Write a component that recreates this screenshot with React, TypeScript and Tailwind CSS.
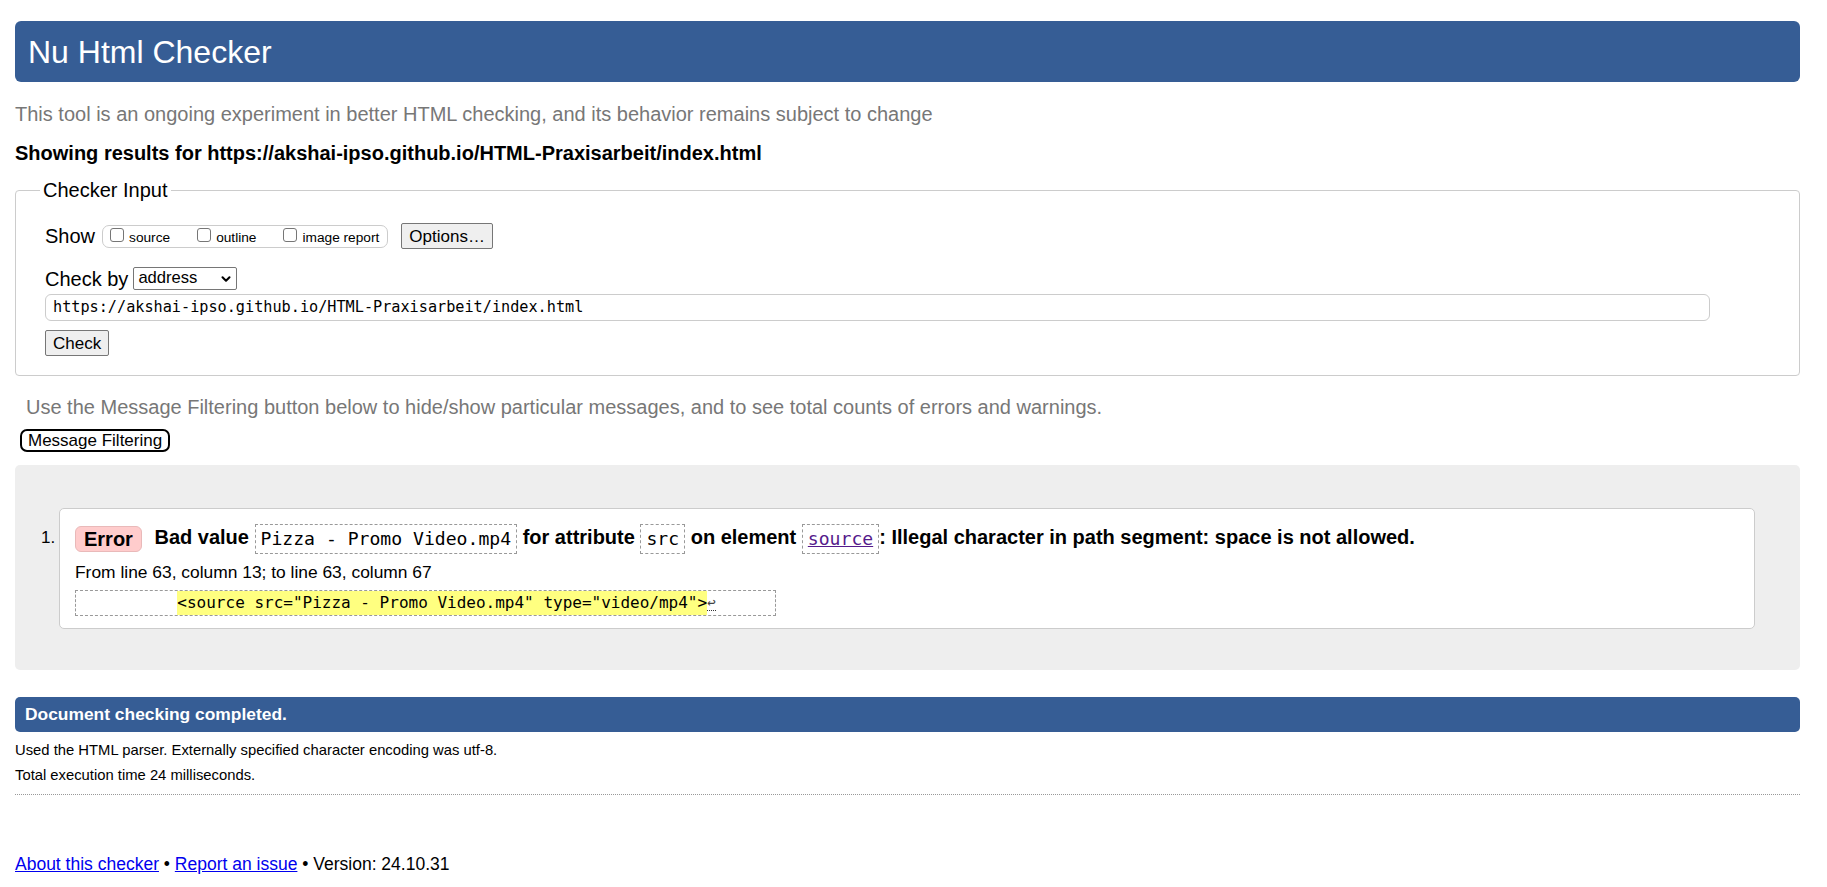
import { ChevronDown } from "lucide-react";

const sans = "font-['Liberation_Sans',Arial,sans-serif]";
const mono = "font-['DejaVu_Sans_Mono','Liberation_Mono',monospace]";

const Code = ({ children }: { children: React.ReactNode }) => (
  <code className={`${mono} inline-block align-middle border border-dashed border-[#999] px-[5px] py-[3px] text-[18.1px] leading-[22px] font-normal`}>
    {children}
  </code>
);

const Check = ({ label }: { label: string }) => (
  <label className="flex items-start gap-[5px] text-[13.7px] leading-[16px]">
    <span className="w-[14px] h-[14px] mt-[1px] border border-[#767676] rounded-[3px] bg-white" />
    <span className="mt-[3px]">{label}</span>
  </label>
);

const App = () => {
  return (
    <div className={`${sans} min-h-screen bg-white text-black pl-[15px] pr-[27px] pt-[21px] pb-[10px]`}>
      <h1 className="bg-[#365d95] text-white rounded-[6px] h-[61px] flex items-center px-[13px] text-[32px] font-normal">
        Nu Html Checker
      </h1>

      <p className="text-[#777] text-[20px] mt-[21px] leading-[23px]">
        This tool is an ongoing experiment in better HTML checking, and its behavior remains subject to change
      </p>
      <p className="font-bold text-[20px] mt-[16px] leading-[23px]">
        Showing results for https://akshai-ipso.github.io/HTML-Praxisarbeit/index.html
      </p>

      <fieldset className="border border-[#ccc] rounded-[4px] mt-[14px] pl-[24px] pt-[21px] pb-[19px]">
        <legend className="text-[20px] px-[3px] leading-[23px]">Checker Input</legend>

        <div className="pl-[5px]">
          <div className="flex items-center h-[26px]">
            <span className="text-[20px]">Show</span>
            <div className="flex items-start gap-[27px] border border-[#ccc] rounded-[7px] h-[23px] pl-[7px] pr-[8px] ml-[7px] pt-[1px]">
              <Check label="source" />
              <Check label="outline" />
              <Check label="image report" />
            </div>
            <button className="ml-[13px] h-[26px] px-[7px] bg-[#efefef] border border-[#767676] rounded-[2px] text-[17px]">
              Options…
            </button>
          </div>

          <div className="flex items-center mt-[18px] h-[23px]">
            <span className="text-[20px]">Check by</span>
            <div className="ml-[5px] w-[104px] h-[23px] border border-[#767676] rounded-[2px] flex items-center justify-between pl-[4px] pr-[3px] text-[16.6px]">
              <span>address</span>
              <ChevronDown className="w-[14px] h-[14px]" strokeWidth={3.5} />
            </div>
          </div>

          <div className={`${mono} mt-[4px] w-[1665px] h-[27px] border border-[#ccc] rounded-[6px] flex items-center px-[7px] text-[15.2px]`}>
            https://akshai-ipso.github.io/HTML-Praxisarbeit/index.html
          </div>

          <button className="mt-[9px] h-[26px] px-[7px] bg-[#efefef] border border-[#767676] rounded-[2px] text-[17px]">
            Check
          </button>
        </div>
      </fieldset>

      <p className="text-[#777] text-[20px] mt-[20px] ml-[11px] leading-[23px]">
        Use the Message Filtering button below to hide/show particular messages, and to see total counts of errors and warnings.
      </p>
      <button className="mt-[10px] ml-[5px] h-[23px] px-[6px] border-2 border-black rounded-[7px] text-[17px] leading-none">
        Message Filtering
      </button>

      <div className="mt-[12px] bg-[#eee] rounded-[5px] pt-[43px] pb-[41px] pl-[26px] pr-[45px]">
        <div className="flex items-start">
          <span className="text-[17px] w-[18px] mt-[19px] leading-[22px]">1.</span>
          <div className="flex-1 bg-white border border-[#ccc] rounded-[5px] pl-[15px] pt-[13px] pb-[12px]">
            <div className="font-bold text-[20px] leading-[30px]">
              <span className="inline-block align-middle bg-[#fcc] border border-[#e9b9b9] rounded-[6px] px-[8px] leading-[24px] mr-[7px]">
                Error
              </span>{" "}
              Bad value <Code>Pizza - Promo Video.mp4</Code> for attribute <Code>src</Code> on element{" "}
              <Code>
                <a href="#" className="text-[#551a8b] underline">source</a>
              </Code>
              : Illegal character in path segment: space is not allowed.
            </div>
            <p className="text-[17.4px] mt-[7px] leading-[22px]">From line 63, column 13; to line 63, column 67</p>
            <div className={`${mono} mt-[7px] w-[701px] h-[26px] border border-dashed border-[#999] flex items-center pl-[5px] text-[16px] whitespace-pre`}>
              <span>{"          "}</span>
              <b className="font-normal bg-[#ffff80]">{'<source src="Pizza - Promo Video.mp4" type="video/mp4">'}</b>
              <span className="text-[#444] border-b border-dotted border-[#333] leading-[15px] text-[14px]">↩</span>
            </div>
          </div>
        </div>
      </div>

      <div className="mt-[27px] bg-[#365d95] text-white rounded-[5px] h-[35px] flex items-center px-[10px] font-bold text-[17.4px]">
        Document checking completed.
      </div>
      <p className="text-[14.8px] mt-[7px] leading-[22px]">
        Used the HTML parser. Externally specified character encoding was utf-8.
      </p>
      <p className="text-[14.8px] mt-[3px] leading-[22px]">Total execution time 24 milliseconds.</p>
      <hr className="mt-[8px] border-0 border-t border-dotted border-[#999]" />

      <p className="text-[17.5px] mt-[58px] leading-[22px]">
        <a href="#" className="text-[#0000ee] underline">About this checker</a>
        {" • "}
        <a href="#" className="text-[#0000ee] underline">Report an issue</a>
        {" • Version: 24.10.31"}
      </p>
    </div>
  );
};

export default App;
